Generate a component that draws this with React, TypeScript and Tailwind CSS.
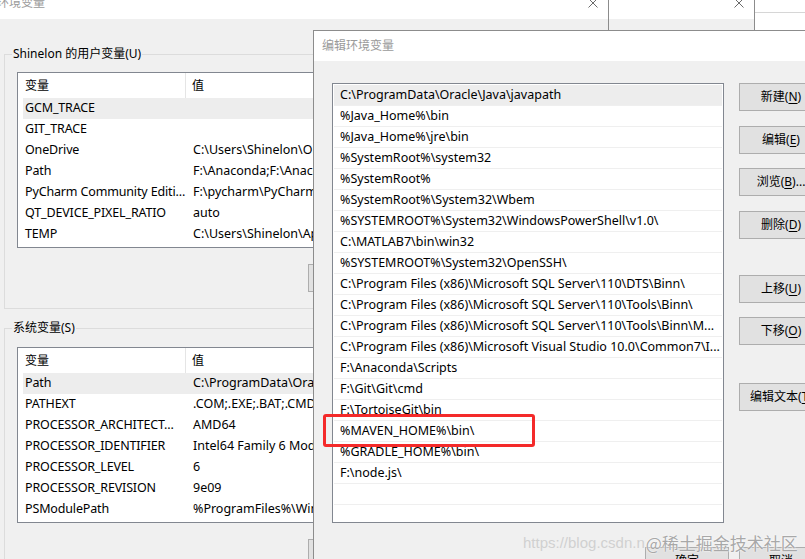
import React from 'react';

const ui = { fontFamily: '"Noto Sans", "Noto Sans CJK SC", sans-serif' };

const userVars: Array<[string, string]> = [
  ['GCM_TRACE', ''],
  ['GIT_TRACE', ''],
  ['OneDrive', 'C:\\Users\\Shinelon\\OneDrive'],
  ['Path', 'F:\\Anaconda;F:\\Anaconda\\Library\\mingw-w64\\bin'],
  ['PyCharm Community Editi...', 'F:\\pycharm\\PyCharm Community Edition\\bin'],
  ['QT_DEVICE_PIXEL_RATIO', 'auto'],
  ['TEMP', 'C:\\Users\\Shinelon\\AppData\\Local\\Temp'],
];

const sysVars: Array<[string, string]> = [
  ['Path', 'C:\\ProgramData\\Oracle\\Java\\javapath'],
  ['PATHEXT', '.COM;.EXE;.BAT;.CMD;.VBS;.VBE'],
  ['PROCESSOR_ARCHITECT...', 'AMD64'],
  ['PROCESSOR_IDENTIFIER', 'Intel64 Family 6 Model 158'],
  ['PROCESSOR_LEVEL', '6'],
  ['PROCESSOR_REVISION', '9e09'],
  ['PSModulePath', '%ProgramFiles%\\WindowsPowerShell\\Modules'],
];

const paths = [
  'C:\\ProgramData\\Oracle\\Java\\javapath',
  '%Java_Home%\\bin',
  '%Java_Home%\\jre\\bin',
  '%SystemRoot%\\system32',
  '%SystemRoot%',
  '%SystemRoot%\\System32\\Wbem',
  '%SYSTEMROOT%\\System32\\WindowsPowerShell\\v1.0\\',
  'C:\\MATLAB7\\bin\\win32',
  '%SYSTEMROOT%\\System32\\OpenSSH\\',
  'C:\\Program Files (x86)\\Microsoft SQL Server\\110\\DTS\\Binn\\',
  'C:\\Program Files (x86)\\Microsoft SQL Server\\110\\Tools\\Binn\\',
  'C:\\Program Files (x86)\\Microsoft SQL Server\\110\\Tools\\Binn\\M...',
  'C:\\Program Files (x86)\\Microsoft Visual Studio 10.0\\Common7\\I...',
  'F:\\Anaconda\\Scripts',
  'F:\\Git\\Git\\cmd',
  'F:\\TortoiseGit\\bin',
  '%MAVEN_HOME%\\bin\\',
  '%GRADLE_HOME%\\bin\\',
  'F:\\node.js\\',
  '',
  '',
];

function CloseX() {
  return (
    <svg width="10" height="10" viewBox="0 0 10 10" className="shrink-0">
      <path d="M0.5 0.5 L9.5 9.5 M9.5 0.5 L0.5 9.5" stroke="#6b6b6b" strokeWidth="1" />
    </svg>
  );
}

function WinButton({ label, hot, tail = ')' }: { label: string; hot: string; tail?: string }) {
  return (
    <div className="flex h-[28px] w-[84px] shrink-0 items-center justify-center whitespace-nowrap border border-[#adadad] bg-[#e1e1e1] text-[12px] text-black">
      {label}(<span className="underline underline-offset-2">{hot}</span>
      {tail}
    </div>
  );
}

function VarList({ rows }: { rows: Array<[string, string]> }) {
  return (
    <div className="h-[176px] w-[600px] border border-[#828790] bg-white text-[12.5px] text-black">
      <div className="flex h-[25px] items-center">
        <div className="flex h-full w-[168px] items-center border-r border-[#e5e5e5] pl-[7px] text-[12px]">变量</div>
        <div className="pl-[6px] text-[12px]">值</div>
      </div>
      {rows.map(([name, value], i) => (
        <div
          key={name}
          className={`ml-[5px] flex h-[21px] items-center whitespace-nowrap ${i === 0 ? 'bg-[#ededed]' : ''}`}
        >
          <div className="w-[163px] pl-[2px] tracking-[-0.15px]">{name}</div>
          <div className="pl-[7px]">{value}</div>
        </div>
      ))}
    </div>
  );
}

export default function App() {
  return (
    <div className="relative h-[559px] w-[805px] overflow-hidden bg-white" style={ui}>
      {/* 环境变量 window */}
      <div className="absolute left-0 top-0 flex h-full w-[608px] flex-col bg-[#f0f0f0]">
        <div className="flex h-[19px] shrink-0 items-start justify-between bg-white pr-[10px]">
          <span className="-ml-[3px] -mt-[5px] text-[12px] leading-[16px] text-[#9a9a9a]">环境变量</span>
          <div className="-mt-[2px]">
            <CloseX />
          </div>
        </div>
        <div className="shrink-0 pl-[4px] pt-[27px]">
          <fieldset className="w-[590px] border border-[#dcdcdc] pb-[16px] pl-[12px]">
            <legend className="-ml-[5px] px-[1px] text-[12px] leading-[16px] text-black">
              Shinelon 的用户变量(U)
            </legend>
            <div className="mt-[10px]">
              <VarList rows={userVars} />
            </div>
            <div className="mt-[16px] pl-[291px]">
              <WinButton label="新建" hot="N" tail=")..." />
            </div>
          </fieldset>
          <fieldset className="mt-[11px] w-[590px] border border-[#dcdcdc] pb-[16px] pl-[12px]">
            <legend className="-ml-[5px] px-[1px] text-[12px] leading-[16px] text-black">系统变量(S)</legend>
            <div className="mt-[11px]">
              <VarList rows={sysVars} />
            </div>
            <div className="mt-[16px] pl-[291px]">
              <WinButton label="新建" hot="W" tail=")..." />
            </div>
          </fieldset>
        </div>
      </div>

      {/* windows behind, at top right */}
      <div className="absolute left-[608px] top-0 flex h-[30px] w-[146px] flex-col border-l border-[#8c8c8c]">
        <div className="flex h-[19px] shrink-0 items-start justify-end bg-white pr-[10px]">
          <div className="-mt-[2px]">
            <CloseX />
          </div>
        </div>
        <div className="flex-1 bg-[#f0f0f0]" />
      </div>
      <div className="absolute left-[754px] top-0 h-[30px] w-[60px] border-l border-[#8c8c8c] bg-white">
        <div className="mt-[12px] border-t border-[#d6d6d6]" />
      </div>

      {/* 编辑环境变量 dialog */}
      <div className="absolute left-[313px] top-[30px] flex h-[560px] w-[522px] flex-col border-l border-t border-[#8c8c8c] bg-[#f0f0f0]">
        <div className="flex h-[30px] shrink-0 items-center bg-white pl-[8px] text-[12px] text-[#9a9a9a]">
          编辑环境变量
        </div>
        <div className="flex shrink-0 gap-[15px] pl-[18px] pt-[22px]">
          <div className="h-[440px] w-[392px] overflow-hidden border border-[#828790] bg-white p-[1px] text-[12.5px] text-black">
            {paths.map((p, i) => (
              <div
                key={i}
                className={`flex h-[21px] items-center overflow-hidden whitespace-nowrap border-b border-[#efefef] pl-[6px] ${
                  i === 0 ? 'bg-[#ededed]' : ''
                }`}
              >
                {p}
              </div>
            ))}
          </div>
          <div className="flex flex-col">
            <WinButton label="新建" hot="N" />
            <div className="mt-[15px]">
              <WinButton label="编辑" hot="E" />
            </div>
            <div className="mt-[14px]">
              <WinButton label="浏览" hot="B" tail=")..." />
            </div>
            <div className="mt-[15px]">
              <WinButton label="删除" hot="D" />
            </div>
            <div className="mt-[36px]">
              <WinButton label="上移" hot="U" />
            </div>
            <div className="mt-[14px]">
              <WinButton label="下移" hot="O" />
            </div>
            <div className="mt-[38px]">
              <WinButton label="编辑文本" hot="T" />
            </div>
          </div>
        </div>
        <div className="mt-[24px] flex shrink-0 justify-end gap-[10px] pr-[12px]">
          <div className="flex h-[28px] w-[84px] items-center justify-center border border-[#adadad] bg-[#e1e1e1] text-[12px] text-black">
            确定
          </div>
          <div className="flex h-[28px] w-[84px] items-center justify-center border border-[#adadad] bg-[#e1e1e1] text-[12px] text-black">
            取消
          </div>
        </div>
      </div>

      {/* highlight box */}
      <div className="absolute left-[323px] top-[414px] h-[33px] w-[212px] rounded-[3px] border-[3px] border-[#f42a2a]" />

      {/* watermark */}
      <div className="pointer-events-none absolute left-[523px] top-[530px] flex items-center whitespace-nowrap">
        <span
          className="text-[15px] text-[#d0d0d0]"
          style={{ fontFamily: '"Liberation Sans", Arial, sans-serif' }}
        >
          https://blog.csdn.n
        </span>
        <span
          className="ml-[1px] text-[17px] text-[#a8a8a8] [text-shadow:0_0_2px_#fff,0_0_1px_#fff]"
          style={{ fontFamily: '"Noto Sans CJK SC", sans-serif' }}
        >
          @稀土掘金技术社区
        </span>
      </div>
    </div>
  );
}
